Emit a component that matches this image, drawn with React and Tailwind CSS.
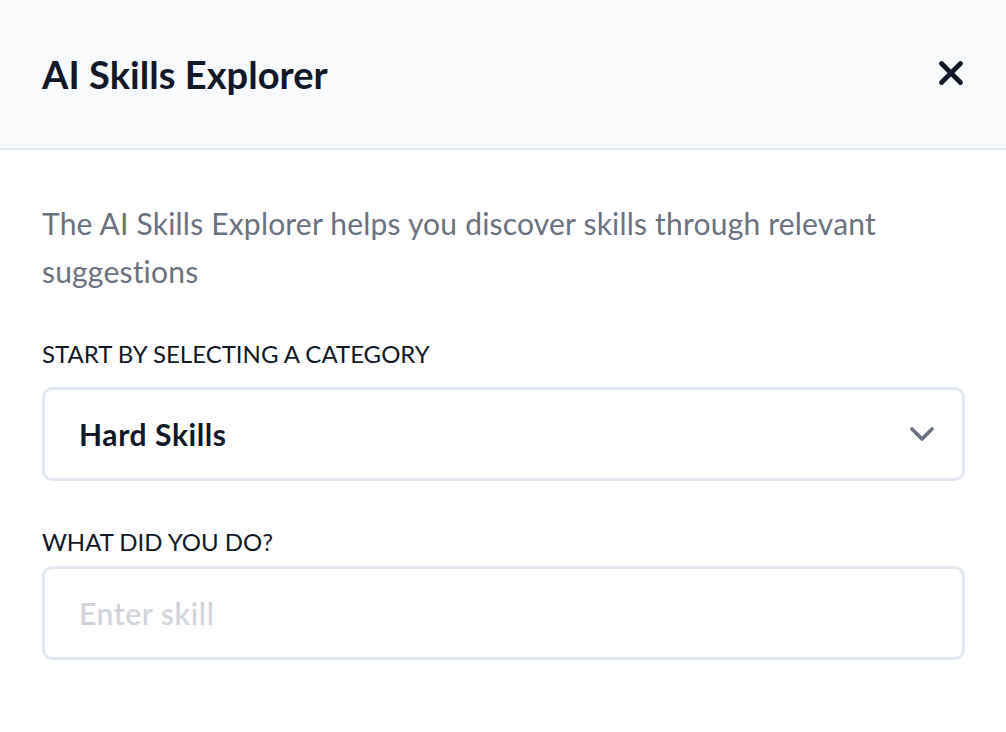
import { X, ChevronDown } from "lucide-react"

export default function App() {
  return (
    <div className="w-[1006px] h-[732px] bg-white text-[#111827] font-['Lato','Noto_Sans',sans-serif]">
      <div className="h-[150px] bg-[#f8fafc] border-b-2 border-[#e2e8f0] flex items-center justify-between pl-[42px] pr-[36px]">
        <h1 className="text-[38px] font-bold tracking-[0.05px]">AI Skills Explorer</h1>
        <button className="text-[#111827] -mt-[3px]">
          <X size={38} strokeWidth={3} />
        </button>
      </div>
      <div className="pl-[42px] pr-[41px] pt-[49px]">
        <p className="text-[30px] leading-[48px] tracking-[0.2px] text-[#6b7280]">
          The AI Skills Explorer helps you discover skills through relevant suggestions
        </p>
        <label className="block mt-[43px] text-[24px] leading-[32px]">START BY SELECTING A CATEGORY</label>
        <div className="mt-[17px] h-[94px] border-[3px] border-[#e2e8f0] rounded-[10px] flex items-center justify-between pl-[34px] pr-[20px]">
          <span className="text-[30px] font-bold tracking-[0.6px]">Hard Skills</span>
          <ChevronDown size={40} strokeWidth={2.2} className="text-[#6b7280]" />
        </div>
        <label className="block mt-[45px] text-[24px] leading-[32px]">WHAT DID YOU DO?</label>
        <div className="mt-[8px] h-[94px] border-[3px] border-[#e2e8f0] rounded-[10px] flex items-center pl-[34px]">
          <input placeholder="Enter skill" className="w-full outline-none text-[30px] font-semibold tracking-[0.6px] placeholder:text-[#d1d5db] bg-transparent" />
        </div>
      </div>
    </div>
  )
}
